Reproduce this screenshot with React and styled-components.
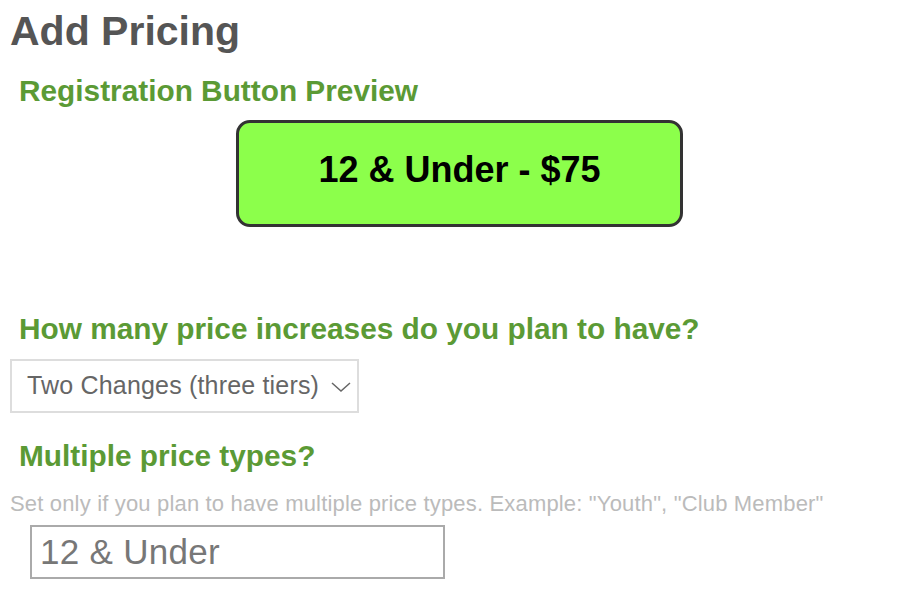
import React from 'react';
import styled, { createGlobalStyle } from 'styled-components';

const GlobalStyle = createGlobalStyle`
  body {
    margin: 0;
    background: #fff;
    font-family: 'Liberation Sans', Arial, Helvetica, sans-serif;
  }
`;

const Page = styled.div`
  display: flex;
  flex-direction: column;
  align-items: flex-start;
  padding: 11px 15px 0 10px;
`;

const Title = styled.h1`
  margin: 0;
  font-size: 41px;
  line-height: 1;
  font-weight: 700;
  color: #555;
`;

const Heading = styled.h3`
  margin: ${(props) => props.top}px 0 0 9px;
  font-size: 29.8px;
  line-height: 1;
  font-weight: 700;
  color: #5b9a35;
`;

const PreviewRow = styled.div`
  align-self: stretch;
  display: flex;
  justify-content: center;
  margin-top: 14px;
`;

const PreviewButton = styled.button`
  width: 447px;
  height: 107px;
  box-sizing: border-box;
  border: 3px solid #333;
  border-radius: 14px;
  padding: 0 0 6px;
  background: #8cff4b;
  color: #000;
  font-family: inherit;
  font-size: 36px;
  font-weight: 700;
`;

const SelectBox = styled.div`
  margin-top: 15px;
  width: 349px;
  height: 54px;
  box-sizing: border-box;
  border: 2px solid #ddd;
  display: flex;
  align-items: center;
  justify-content: space-between;
  padding: 0 6px 0 15px;
  color: #666;
  font-size: 25px;
  letter-spacing: 0.18px;
`;

const Chevron = styled.svg`
  width: 20px;
  height: 10px;
  margin-top: 2px;
`;

const Hint = styled.p`
  margin: 23px 0 0;
  font-size: 22px;
  line-height: 1;
  letter-spacing: 0.17px;
  color: #bbb;
`;

const TextInput = styled.input`
  margin: 10px 0 0 20px;
  width: 415px;
  height: 54px;
  box-sizing: border-box;
  border: 2px solid #aaa;
  padding: 0 8px;
  font-family: inherit;
  font-size: 35px;
  letter-spacing: 0.3px;
  color: #777;
  outline: none;
`;

const App = () => (
  <>
    <GlobalStyle />
    <Page>
      <Title>Add Pricing</Title>
      <Heading top={24}>Registration Button Preview</Heading>
      <PreviewRow>
        <PreviewButton>12 &amp; Under - $75</PreviewButton>
      </PreviewRow>
      <Heading top={87}>How many price increases do you plan to have?</Heading>
      <SelectBox>
        <span>Two Changes (three tiers)</span>
        <Chevron viewBox="0 0 20 10">
          <polyline points="1,1 10,9 19,1" fill="none" stroke="#666" strokeWidth="1.5" />
        </Chevron>
      </SelectBox>
      <Heading top={28}>Multiple price types?</Heading>
      <Hint>Set only if you plan to have multiple price types. Example: "Youth", "Club Member"</Hint>
      <TextInput defaultValue="12 & Under" />
    </Page>
  </>
);

export default App;
